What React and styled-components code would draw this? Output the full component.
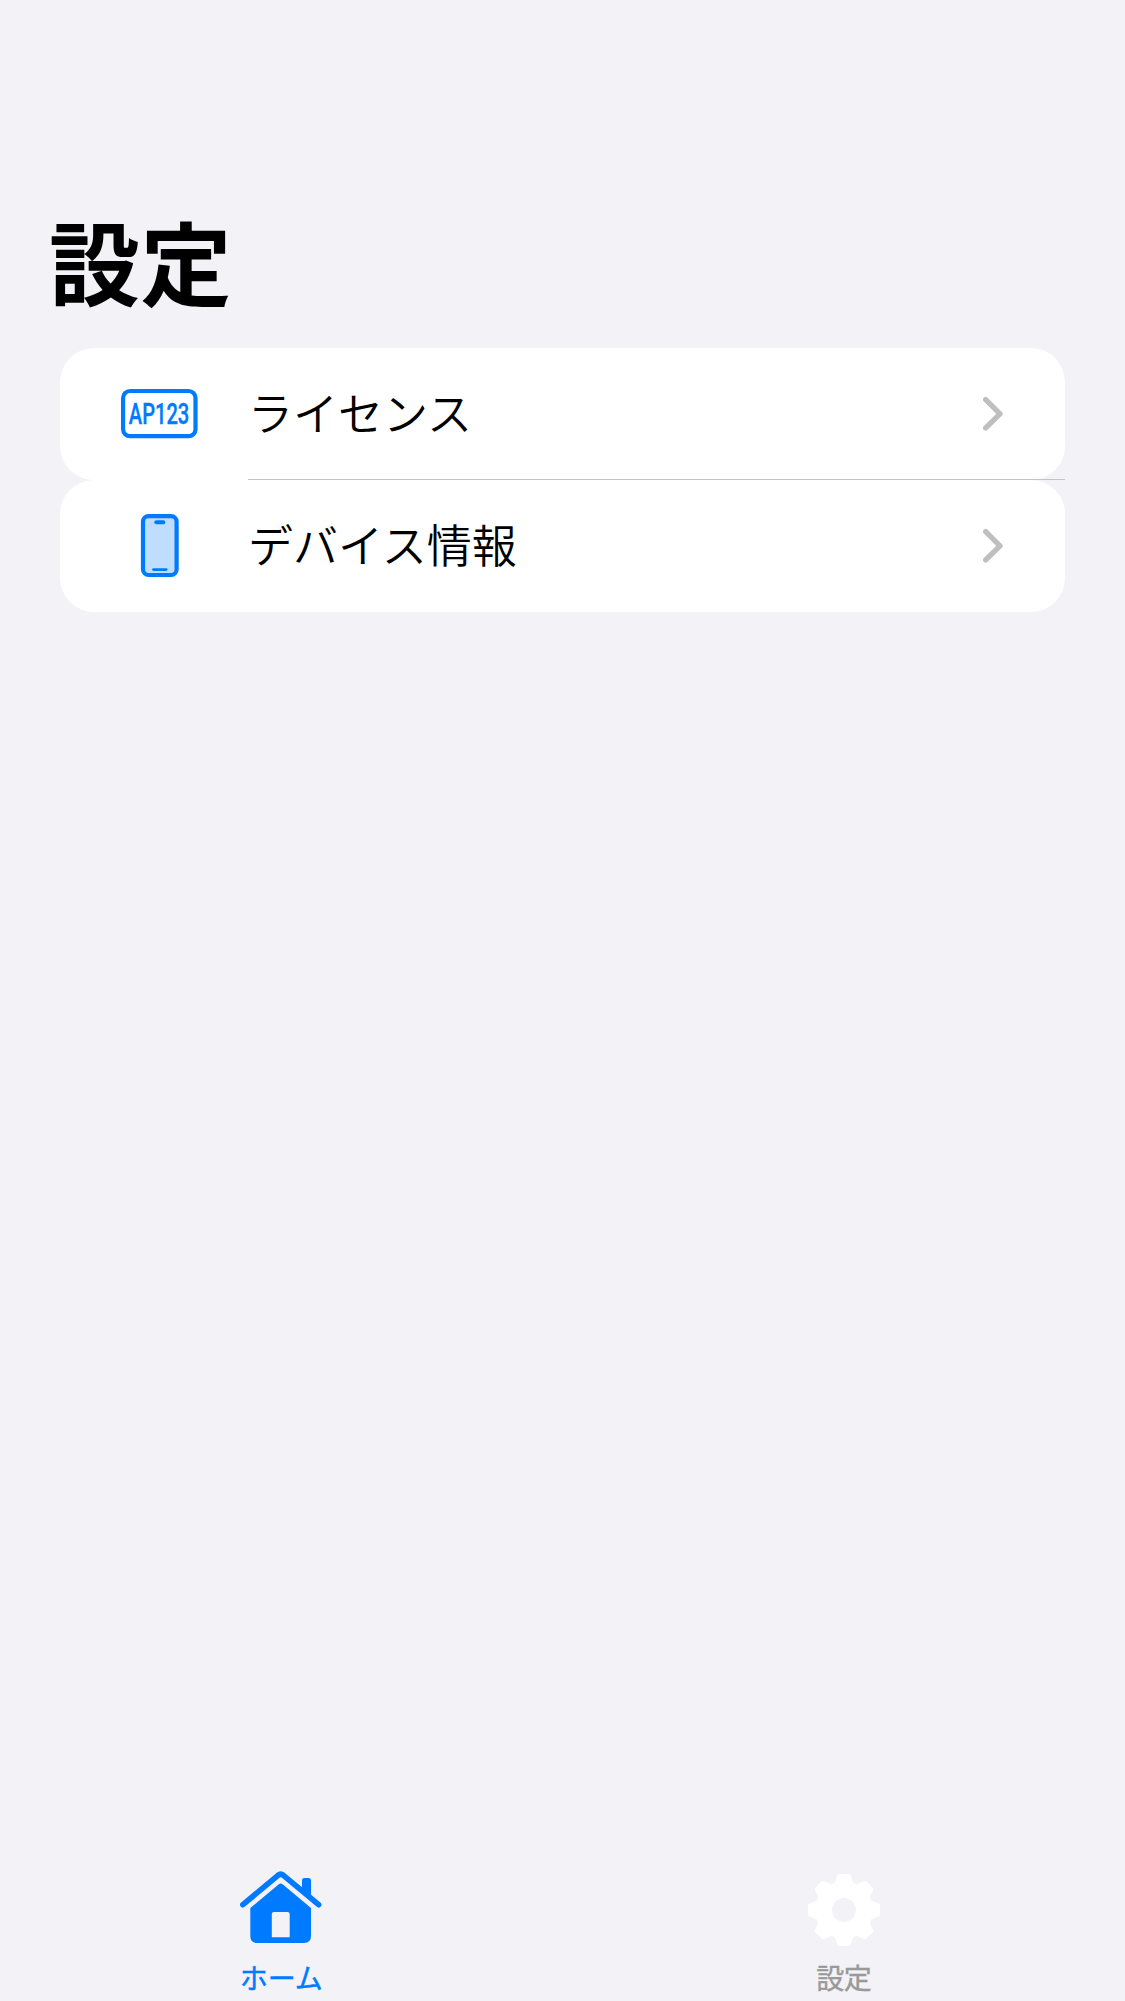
import React from "react";
import styled, { createGlobalStyle } from "styled-components";

const GlobalStyle = createGlobalStyle`
  * { box-sizing: border-box; }
  body {
    margin: 0;
    background: #f2f2f7;
    font-family: "Noto Sans CJK JP", sans-serif;
    color: #000;
  }
`;

const Screen = styled.div`
  display: flex;
  flex-direction: column;
  width: 1125px;
  height: 2001px;
  overflow: hidden;
  background: #f2f2f7;
`;

const Title = styled.h1`
  margin: 0;
  padding: 199px 0 0 49px;
  height: 348px;
  font-size: 91px;
  font-weight: 700;
  line-height: 120px;
  letter-spacing: 0.5px;
`;

const List = styled.ul`
  list-style: none;
  margin: 0;
  padding: 0 60px;
  flex: 1;
`;

const Row = styled.li`
  position: relative;
  display: flex;
  align-items: center;
  height: 132px;
  padding-right: 62px;
  background: #fff;
  border-radius: 34px;
`;

const Separator = styled.div`
  position: absolute;
  left: 188px;
  right: 0;
  bottom: 0;
  height: 1px;
  background: #c4c4c7;
`;

const IconSlot = styled.div`
  display: flex;
  justify-content: center;
  width: 198px;
  margin-right: -10px;

  svg {
    display: block;
    overflow: visible;
  }
`;

const RowLabel = styled.span`
  flex: 1;
  padding-bottom: 5px;
  font-size: 45px;
  font-weight: 350;
  line-height: 60px;
  letter-spacing: 0;
`;

const TabBar = styled.nav`
  display: flex;
  height: 147px;
`;

const Tab = styled.div`
  flex: 1;
  display: flex;
  flex-direction: column;
  align-items: center;
  color: ${(p) => (p.$active ? "#007aff" : "#999")};

  svg { display: block; }
`;

const TabIcon = styled.div`
  display: flex;
  align-items: flex-end;
  height: 92px;
`;

const TabLabel = styled.span`
  margin-top: 13px;
  font-size: 28px;
  font-weight: 400;
  -webkit-text-stroke: 0.4px currentColor;
  line-height: 36px;
  letter-spacing: ${(p) => p.$tracking || "0"};
`;

const PlateIcon = () => (
  <svg width="78" height="50" viewBox="0 0 78 50">
    <rect x="3.1" y="2" width="72.4" height="45.2" rx="7" fill="none" stroke="#007aff" strokeWidth="4.2" />
    <text
      x="8.8"
      y="35"
      textLength="60.5"
      lengthAdjust="spacingAndGlyphs"
      fontFamily="Roboto, sans-serif"
      fontSize="29.4"
      fontWeight="500"
      fill="#007aff"
      stroke="#007aff"
      strokeWidth="0.4"
      strokeLinejoin="round"
    >
      AP123
    </text>
  </svg>
);

const PhoneIcon = () => (
  <svg width="38" height="63" viewBox="0 0 38 63">
    <rect x="3" y="1.2" width="33.6" height="58.8" rx="5.5" fill="#bfdeff" stroke="#007aff" strokeWidth="4.2" />
    <rect x="14.3" y="5.2" width="11" height="4" rx="2" fill="#007aff" />
    <rect x="12.1" y="53.2" width="15.4" height="2.8" rx="1.4" fill="#007aff" />
  </svg>
);

const ChevronIcon = () => (
  <svg width="20" height="36" viewBox="0 0 20 36">
    <path
      d="M2.7 3.7 L17 17.8 L2.7 31.9"
      fill="none"
      stroke="#bfbfbf"
      strokeWidth="5.4"
      strokeLinecap="round"
      strokeLinejoin="round"
    />
  </svg>
);

const HomeIcon = () => (
  <svg width="82" height="76" viewBox="0 0 82 76">
    <g fill="currentColor">
      <path d="M62 22V10.5Q62 8 64.5 8H68.5Q71 8 71 10.5V27L62 20Z" />
      <path
        fillRule="evenodd"
        d="M38.8 14.2Q40.7 12.7 42.6 14.2L71 38V66Q71 73 64 73H17.3Q10.3 73 10.3 66V38ZM34 42Q31.8 42 31.8 44.2V67.3H49.7V44.2Q49.7 42 47.5 42Z"
      />
    </g>
    <path
      d="M2.9 34.7L38 5.3Q40.7 3.2 43.4 5.3L78.6 34.7"
      fill="none"
      stroke="currentColor"
      strokeWidth="5.6"
      strokeLinecap="round"
      strokeLinejoin="round"
    />
  </svg>
);

const toothPoints = [
  [-7.5, -26],
  [-4.6, -34],
  [4.6, -34],
  [7.5, -26],
];

const gearPath =
  "M" +
  Array.from({ length: 8 }, (_, i) => (i * Math.PI) / 4)
    .flatMap((a) =>
      toothPoints.map(([x, y]) => {
        const px = x * Math.cos(a) - y * Math.sin(a);
        const py = x * Math.sin(a) + y * Math.cos(a);
        return `${px.toFixed(2)} ${py.toFixed(2)}`;
      })
    )
    .join("L") +
  "Z";

const GearIcon = () => (
  <svg width="76" height="76" viewBox="-38 -40 76 76">
    <path d={gearPath} fill="#fff" stroke="#fff" strokeWidth="4" strokeLinejoin="round" />
    <circle r="12" fill="#f2f2f7" />
  </svg>
);

const rows = [
  { label: "ライセンス", Icon: PlateIcon },
  { label: "デバイス情報", Icon: PhoneIcon },
];

export default function App() {
  return (
    <>
      <GlobalStyle />
      <Screen>
        <Title>設定</Title>
        <List>
          {rows.map(({ label, Icon }, i) => (
            <Row key={label}>
              <IconSlot>
                <Icon />
              </IconSlot>
              <RowLabel>{label}</RowLabel>
              <ChevronIcon />
              {i < rows.length - 1 && <Separator />}
            </Row>
          ))}
        </List>
        <TabBar>
          <Tab $active>
            <TabIcon>
              <HomeIcon />
            </TabIcon>
            <TabLabel>ホーム</TabLabel>
          </Tab>
          <Tab>
            <TabIcon>
              <GearIcon />
            </TabIcon>
            <TabLabel $tracking="-0.5px">設定</TabLabel>
          </Tab>
        </TabBar>
      </Screen>
    </>
  );
}
